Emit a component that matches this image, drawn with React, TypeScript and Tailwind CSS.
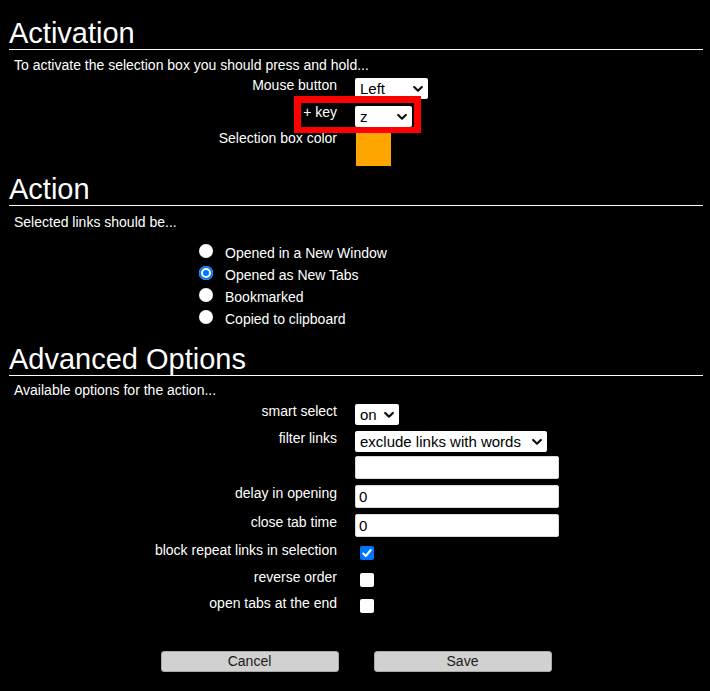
import React, { useState } from 'react';

// Shared label column: right edge at 337px, controls start at 355px
function Row({ label, height, labelShift = '', children }: { label?: string; height: string; labelShift?: string; children: React.ReactNode }) {
  return (
    <div className={`flex items-start ${height}`}>
      <div className={`w-[323px] text-right text-[14px] leading-[16px] shrink-0 ${labelShift}`}>{label}</div>
      <div className="ml-[18px] flex items-start">{children}</div>
    </div>
  );
}

function Chevron() {
  return (
    <svg width="10" height="7" viewBox="0 0 10 7" className="absolute right-[5px] top-1/2 -translate-y-1/2 pointer-events-none">
      <polyline points="1.2,1.5 5,5.2 8.8,1.5" fill="none" stroke="#111" strokeWidth="2.2" strokeLinecap="round" strokeLinejoin="round" />
    </svg>
  );
}

function Select({ options, value, onChange, width }: { options: string[]; value: string; onChange: (v: string) => void; width: string }) {
  return (
    <span className="relative inline-block">
      <select
        value={value}
        onChange={(e) => onChange(e.target.value)}
        className={`appearance-none bg-white text-black text-[15px] leading-[19px] h-[21px] pl-[5px] rounded-[2px] outline-none cursor-pointer ${width}`}
      >
        {options.map((o) => (
          <option key={o} value={o}>{o}</option>
        ))}
      </select>
      <Chevron />
    </span>
  );
}

function Checkbox({ checked, onChange }: { checked: boolean; onChange: (v: boolean) => void }) {
  return (
    <span className="relative inline-block mt-[4px] ml-[5px] w-[14px] h-[14px]">
      <input
        type="checkbox"
        checked={checked}
        onChange={(e) => onChange(e.target.checked)}
        className="appearance-none block w-[14px] h-[14px] rounded-[2px] bg-white checked:bg-[#0075ff] cursor-pointer"
      />
      {checked && (
        <svg width="14" height="14" viewBox="0 0 14 14" className="absolute inset-0 pointer-events-none">
          <polyline points="3.2,7.4 5.8,10 10.8,4" fill="none" stroke="white" strokeWidth="2" strokeLinecap="round" strokeLinejoin="round" />
        </svg>
      )}
    </span>
  );
}

function Heading({ children, className = '' }: { children: React.ReactNode; className?: string }) {
  return (
    <h1 className={`text-[29px] leading-[32px] border-b border-white font-normal ${className}`}>{children}</h1>
  );
}

const ACTIONS = ['Opened in a New Window', 'Opened as New Tabs', 'Bookmarked', 'Copied to clipboard'];

export default function App() {
  const [mouse, setMouse] = useState('Left');
  const [key, setKey] = useState('z');
  const [action, setAction] = useState('Opened as New Tabs');
  const [smart, setSmart] = useState('on');
  const [filter, setFilter] = useState('exclude links with words');
  const [words, setWords] = useState('');
  const [delay, setDelay] = useState('0');
  const [closeTime, setCloseTime] = useState('0');
  const [blockRepeat, setBlockRepeat] = useState(true);
  const [reverse, setReverse] = useState(false);
  const [atEnd, setAtEnd] = useState(false);

  const inputCls = 'bg-white text-black text-[15px] h-[23px] w-[204px] pl-[3px] rounded-[2px] outline-none border border-[#d8d8d8]';

  return (
    <div className="min-h-[691px] bg-black text-white font-['Liberation_Sans',Arial,sans-serif] pt-[17px] pl-[9px] pr-[7px]">
      {/* Activation */}
      <Heading>Activation</Heading>
      <p className="mt-[7px] pl-[5px] text-[14px] leading-[16px]">To activate the selection box you should press and hold...</p>
      <div className="relative mt-[4px] pl-[5px]">
        <Row label="Mouse button" height="h-[28px]">
          <Select options={['Left', 'Middle', 'Right']} value={mouse} onChange={setMouse} width="w-[73px]" />
        </Row>
        <Row label="+ key" height="h-[28px]" labelShift="-mt-[1px]">
          <Select options={['z', 'shift', 'ctrl', 'alt']} value={key} onChange={setKey} width="w-[57px]" />
        </Row>
        <Row label="Selection box color" height="h-[33px]" labelShift="-mt-[3px]">
          <div className="ml-[1px] w-[35px] h-[33px] bg-[#ffa500]" />
        </Row>
        {/* annotation box */}
        <div className="absolute left-[285px] top-[19px] w-[127px] h-[37px] border-[7px] border-b-[6px] border-[#ff0000] pointer-events-none" />
      </div>

      {/* Action */}
      <Heading className="mt-[7px]">Action</Heading>
      <p className="mt-[8px] pl-[5px] text-[14px] leading-[16px]">Selected links should be...</p>
      <div className="mt-[14px] pl-[190px]">
        {ACTIONS.map((a) => (
          <label key={a} className="flex items-start h-[22px] text-[14px] leading-[16px] cursor-pointer">
            <input
              type="radio"
              name="action"
              checked={action === a}
              onChange={() => setAction(a)}
              className="appearance-none shrink-0 w-[14px] h-[14px] rounded-full bg-white checked:bg-[#0075ff] checked:shadow-[inset_0_0_0_2px_#0075ff,inset_0_0_0_4px_#ffffff] cursor-pointer"
            />
            <span className="ml-[12px] mt-[1px]">{a}</span>
          </label>
        ))}
      </div>

      {/* Advanced Options */}
      <Heading className="mt-[11px]">Advanced Options</Heading>
      <p className="mt-[6px] pl-[5px] text-[14px] leading-[16px]">Available options for the action...</p>
      <div className="mt-[5px] pl-[5px]">
        <Row label="smart select" height="h-[27px]">
          <Select options={['on', 'off']} value={smart} onChange={setSmart} width="w-[44px]" />
        </Row>
        <Row label="filter links" height="h-[26px]">
          <Select
            options={['exclude links with words', 'include links with words']}
            value={filter}
            onChange={setFilter}
            width="w-[192px]"
          />
        </Row>
        <Row height="h-[29px]">
          <input type="text" value={words} onChange={(e) => setWords(e.target.value)} className={inputCls} />
        </Row>
        <Row label="delay in opening" height="h-[29px]">
          <input type="text" value={delay} onChange={(e) => setDelay(e.target.value)} className={inputCls} />
        </Row>
        <Row label="close tab time" height="h-[28px]">
          <input type="text" value={closeTime} onChange={(e) => setCloseTime(e.target.value)} className={inputCls} />
        </Row>
        <Row label="block repeat links in selection" height="h-[27px]">
          <Checkbox checked={blockRepeat} onChange={setBlockRepeat} />
        </Row>
        <Row label="reverse order" height="h-[26px]">
          <Checkbox checked={reverse} onChange={setReverse} />
        </Row>
        <Row label="open tabs at the end" height="h-[26px]">
          <Checkbox checked={atEnd} onChange={setAtEnd} />
        </Row>
      </div>

      <div className="mt-[30px] flex justify-center gap-[35px]">
        <button className="w-[178px] h-[21px] bg-[#d1d1d1] border border-[#a9a9a9] rounded-[3px] text-[#1a1a1a] text-[14px] leading-[19px]">Cancel</button>
        <button className="w-[178px] h-[21px] bg-[#d1d1d1] border border-[#a9a9a9] rounded-[3px] text-[#1a1a1a] text-[14px] leading-[19px]">Save</button>
      </div>
    </div>
  );
}
